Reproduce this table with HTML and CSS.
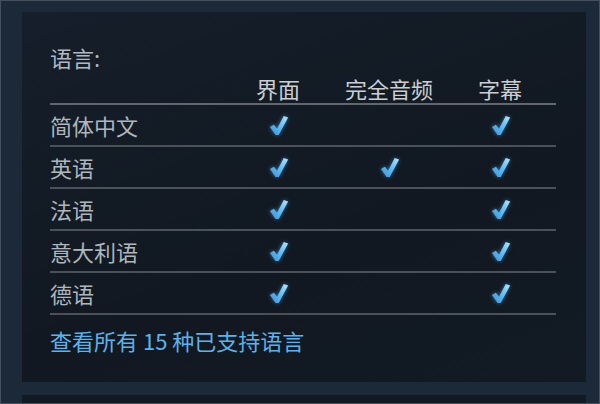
FILE: index.html
```html
<!DOCTYPE html>
<html lang="zh-CN">
<head>
  <meta charset="UTF-8">
  <title>语言</title>
  <link rel="stylesheet" href="styles.css">
</head>
<body>
  <svg width="0" height="0" class="defs">
    <defs>
      <linearGradient id="chk" x1="0" y1="1" x2="1" y2="0">
        <stop offset="0" stop-color="#3a8fd4"/>
        <stop offset="0.55" stop-color="#66c0f5"/>
        <stop offset="1" stop-color="#b8e4fb"/>
      </linearGradient>
      <symbol id="check" viewBox="0 0 20 22">
        <path d="M1.8 12.4 L5.6 10.2 L8.6 14.2 L15 1.8 L19.2 3.4 L10.2 20.2 L7.2 20.2 Z" fill="url(#chk)"/>
      </symbol>
    </defs>
  </svg>

  <div class="page">
    <div class="panel">
      <div class="title">语言:</div>

      <div class="lang-table">
        <div class="row head">
          <div></div>
          <div class="col">界面</div>
          <div class="col">完全音频</div>
          <div class="col">字幕</div>
        </div>
        <div class="row">
          <div class="name">简体中文</div>
          <div class="col"><svg class="tick"><use href="#check"/></svg></div>
          <div class="col"></div>
          <div class="col"><svg class="tick"><use href="#check"/></svg></div>
        </div>
        <div class="row">
          <div class="name">英语</div>
          <div class="col"><svg class="tick"><use href="#check"/></svg></div>
          <div class="col"><svg class="tick"><use href="#check"/></svg></div>
          <div class="col"><svg class="tick"><use href="#check"/></svg></div>
        </div>
        <div class="row">
          <div class="name">法语</div>
          <div class="col"><svg class="tick"><use href="#check"/></svg></div>
          <div class="col"></div>
          <div class="col"><svg class="tick"><use href="#check"/></svg></div>
        </div>
        <div class="row">
          <div class="name">意大利语</div>
          <div class="col"><svg class="tick"><use href="#check"/></svg></div>
          <div class="col"></div>
          <div class="col"><svg class="tick"><use href="#check"/></svg></div>
        </div>
        <div class="row">
          <div class="name">德语</div>
          <div class="col"><svg class="tick"><use href="#check"/></svg></div>
          <div class="col"></div>
          <div class="col"><svg class="tick"><use href="#check"/></svg></div>
        </div>
      </div>

      <a class="all-langs" href="#">查看所有 15 种已支持语言</a>
    </div>
    <div class="next-panel"></div>
  </div>
</body>
</html>
```

FILE: styles.css
```css
html, body {
  margin: 0;
  padding: 0;
}

body {
  width: 600px;
  height: 404px;
  box-sizing: border-box;
  border: 1px solid #46505c;
  background-color: #1c2939;
  font-family: "Noto Sans CJK SC", "Noto Sans", sans-serif;
  overflow: hidden;
}

.defs {
  position: absolute;
}

.page {
  padding: 11px 13px 0 21px;
}

.panel {
  width: 564px;
  height: 370px;
  box-sizing: border-box;
  padding: 31px 30px 0 28px;
  background: linear-gradient(160deg, #151e2a 0%, #111821 60%, #121a23 100%);
}

.title {
  font-size: 22px;
  line-height: 28px;
  color: #b0b9c2;
}

.lang-table {
  width: 506px;
}

.row {
  display: grid;
  grid-template-columns: 172px 112px 110px 112px;
  align-items: center;
  height: 40px;
  border-bottom: 2px solid #4b5158;
  font-size: 22px;
  color: #aeb6be;
}

.row.head {
  height: 32px;
  align-items: end;
  color: #cbced2;
  border-bottom-color: #62676d;
}

.row.head .col {
  line-height: 30px;
}

.name {
  line-height: 28px;
}

.col {
  display: flex;
  justify-content: center;
  align-items: center;
}

.tick {
  width: 21px;
  height: 23px;
  filter: drop-shadow(0 0 2px rgba(80, 170, 240, 0.6));
}

.all-langs {
  display: block;
  margin-top: 11px;
  font-size: 22px;
  line-height: 28px;
  color: #5eb2ea;
  text-decoration: none;
}

.next-panel {
  margin-top: 13px;
  width: 564px;
  height: 20px;
  background-color: #121922;
}
```
